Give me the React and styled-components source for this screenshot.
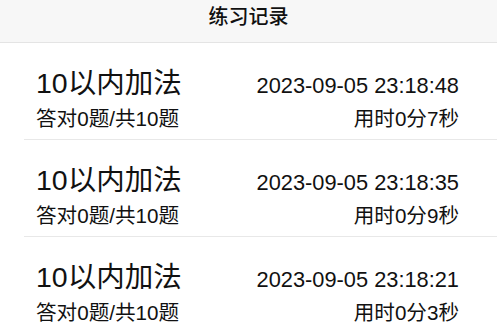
import React from 'react';
import styled, { createGlobalStyle } from 'styled-components';

const GlobalStyle = createGlobalStyle`
    html, body {
        margin: 0;
        padding: 0;
        background: #FFFFFF;
    }
    body {
        font-family: "Liberation Sans", "Noto Sans CJK SC", sans-serif;
        color: #111111;
    }
`;

const Page = styled.div`
    width: 497px;
    height: 333px;
    overflow: hidden;
    background: #FFFFFF;
`;

const NavBar = styled.div`
    height: 42px;
    background: #F7F7F7;
    border-bottom: 1px solid #E4E4E4;
    display: flex;
    align-items: center;
    justify-content: center;
`;

const NavTitle = styled.div`
    font-size: 20px;
    font-weight: 500;
    line-height: 24px;
    color: #111111;
    margin-top: -8px;
`;

const List = styled.div`
    padding-left: 24px;
`;

const Record = styled.div`
    box-sizing: border-box;
    height: 97px;
    border-bottom: 1px solid #E8E8E8;
    padding: 23px 38px 0 12px;
    display: flex;
    flex-direction: column;
`;

const Line = styled.div`
    display: flex;
    justify-content: space-between;
    align-items: baseline;
    margin-top: ${props => props.gap || 0}px;
`;

const Title = styled.div`
    font-size: 28.5px;
    line-height: 34px;
`;

const Date = styled.div`
    font-size: 21.8px;
    line-height: 34px;
`;

const Info = styled.div`
    font-size: 20.6px;
    line-height: 24px;
`;

const records = [
    { name: '10以内加法', right: 0, total: 10, time: '2023-09-05 23:18:48', used: '0分7秒' },
    { name: '10以内加法', right: 0, total: 10, time: '2023-09-05 23:18:35', used: '0分9秒' },
    { name: '10以内加法', right: 0, total: 10, time: '2023-09-05 23:18:21', used: '0分3秒' },
];

export default function App() {
    return (
        <Page>
            <GlobalStyle />
            <NavBar>
                <NavTitle>练习记录</NavTitle>
            </NavBar>
            <List>
                {records.map((item, i) => (
                    <Record key={i}>
                        <Line>
                            <Title>{item.name}</Title>
                            <Date>{item.time}</Date>
                        </Line>
                        <Line gap={4}>
                            <Info>答对{item.right}题/共{item.total}题</Info>
                            <Info>用时{item.used}</Info>
                        </Line>
                    </Record>
                ))}
            </List>
        </Page>
    );
}
